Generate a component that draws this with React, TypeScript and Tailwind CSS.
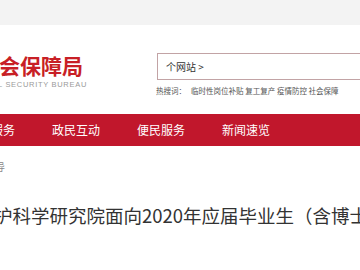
import React from "react";

export default function App() {
  const cjk = "font-['Microsoft_YaHei','Noto_Sans_CJK_SC',sans-serif]";
  return (
    <div className={`w-[360px] h-[270px] overflow-hidden bg-white ${cjk}`}>
      <div className="h-[25px] bg-[#f3f3f3]" />
      <div className="flex h-[89px]">
        <div className="w-[157px] shrink-0 pt-[28px] overflow-hidden">
          <div className="-ml-[1px] text-[21px] leading-[24px] font-bold text-[#c81f26] whitespace-nowrap">
            会保障局
          </div>
          <div className="mt-[3px] -ml-[2px] text-[7.5px] leading-[9px] text-[#9a9a9a] tracking-[0.7px] whitespace-nowrap font-['Liberation_Sans',sans-serif]">
            L SECURITY BUREAU
          </div>
        </div>
        <div className="flex-1 min-w-0 pt-[28px]">
          <div className="h-[27px] border border-[#c2a3a5] border-r-0 flex items-center pl-[8px] text-[10px] text-[#333] whitespace-nowrap">
            个网站 &gt;
          </div>
          <div className="mt-[6px] -ml-[1px] text-[7.5px] leading-[10px] text-[#555] whitespace-nowrap overflow-hidden">
            热搜词：&nbsp;&nbsp;&nbsp;临时性岗位补贴 复工复产 疫情防控 社会保障
          </div>
        </div>
      </div>
      <div className="h-[32px] bg-[#c1172c] flex items-center gap-[37px] -ml-[33px] pb-[1px] text-[12px] text-white whitespace-nowrap">
        <span className="w-[48px]">政务服务</span>
        <span className="w-[48px]">政民互动</span>
        <span className="w-[48px]">便民服务</span>
        <span className="w-[48px]">新闻速览</span>
      </div>
      <div className="mt-[15px] -ml-[5px] text-[10px] leading-[12px] text-[#888] whitespace-nowrap">
        导
      </div>
      <div className="mt-[30px] -ml-[6px] text-[18.5px] leading-[24px] text-[#333] whitespace-nowrap">
        护科学研究院面向2020年应届毕业生（含博士后）公开招聘
      </div>
    </div>
  );
}
